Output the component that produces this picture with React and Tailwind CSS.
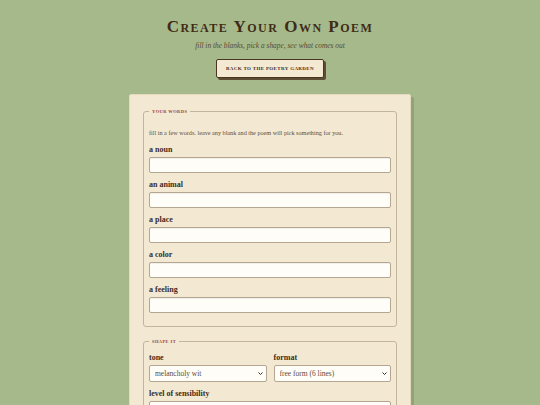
import React from "react";

const serif = "font-['Liberation_Serif','Times_New_Roman',serif]";

function Field({ label }) {
  return (
    <div className="mb-[7px]">
      <label className="block text-[8px] leading-[10px] font-bold text-[#3d2c1e] mb-[2px]">{label}</label>
      <input
        type="text"
        className="block w-full h-[16px] bg-[#fffdf7] border border-[#b4a690] rounded-[2px] shadow-[inset_0_1px_1px_rgba(0,0,0,0.06)] outline-none"
      />
    </div>
  );
}

function Select({ value }) {
  return (
    <div className="relative">
      <select
        defaultValue={value}
        className="block w-full h-[17px] appearance-none bg-[#fffdf7] border border-[#b4a690] rounded-[2px] pl-[5px] text-[7.5px] leading-[15px] text-[#5c4b3b] outline-none font-['Liberation_Serif',serif]"
      >
        <option>{value}</option>
      </select>
      <svg
        className="pointer-events-none absolute right-[4px] top-[7px]"
        width="5"
        height="3"
        viewBox="0 0 5 3"
      >
        <path d="M0.5 0.5 L2.5 2.5 L4.5 0.5" fill="none" stroke="#3d2c1e" strokeWidth="1" />
      </svg>
    </div>
  );
}

function Legend({ children }) {
  return (
    <legend className="px-[3px] text-[4.5px] leading-[7px] font-bold tracking-[0.4px] uppercase text-[#9a4636]">
      {children}
    </legend>
  );
}

export default function App() {
  return (
    <div className={`min-h-screen bg-[#a6b98b] ${serif} flex flex-col items-center pt-[18px]`}>
      <h1 className="text-[17px] leading-[17px] font-bold tracking-[1.5px] text-[#3f2c17] [font-variant:small-caps]">
        Create Your Own Poem
      </h1>
      <p className="mt-[6px] text-[7.4px] leading-[10px] italic text-[#5b4a2e]">
        fill in the blanks, pick a shape, see what comes out
      </p>
      <button className="mt-[8px] h-[19px] px-[9px] bg-[#f4ead4] border border-[#4a3620] rounded-[2px] shadow-[2px_2px_0_#5d4d35] text-[5px] font-bold uppercase tracking-[0.35px] text-[#3d2c1e]">
        Back to the poetry garden
      </button>

      <div className="mt-[16px] w-[282px] bg-[#f3e9d3] border border-[#e6d9bc] rounded-[2px] shadow-[3px_3px_0_rgba(60,80,40,0.2)] px-[13px] pt-[13px] pb-[14px]">
        <fieldset className="border border-[#c2b59c] rounded-[3px] px-[5px] pt-[8px] pb-[6px]">
          <Legend>your words</Legend>
          <p className="mt-[6px] mb-[8px] text-[6.2px] leading-[8px] text-[#5c4b3b]">
            fill in a few words. leave any blank and the poem will pick something for you.
          </p>
          <Field label="a noun" />
          <Field label="an animal" />
          <Field label="a place" />
          <Field label="a color" />
          <Field label="a feeling" />
        </fieldset>

        <fieldset className="mt-[11px] border border-[#c2b59c] rounded-[3px] px-[5px] pt-[8px] pb-[6px]">
          <Legend>shape it</Legend>
          <div className="grid grid-cols-2 gap-[7px] mb-[7px]">
            <div>
              <label className="block text-[8px] leading-[10px] font-bold text-[#3d2c1e] mb-[2px]">tone</label>
              <Select value="melancholy wit" />
            </div>
            <div>
              <label className="block text-[8px] leading-[10px] font-bold text-[#3d2c1e] mb-[2px]">format</label>
              <Select value="free form (6 lines)" />
            </div>
          </div>
          <div className="mb-[7px]">
            <label className="block text-[8px] leading-[10px] font-bold text-[#3d2c1e] mb-[2px]">level of sensibility</label>
            <Select value="moderately sensible" />
          </div>
        </fieldset>
      </div>
    </div>
  );
}
